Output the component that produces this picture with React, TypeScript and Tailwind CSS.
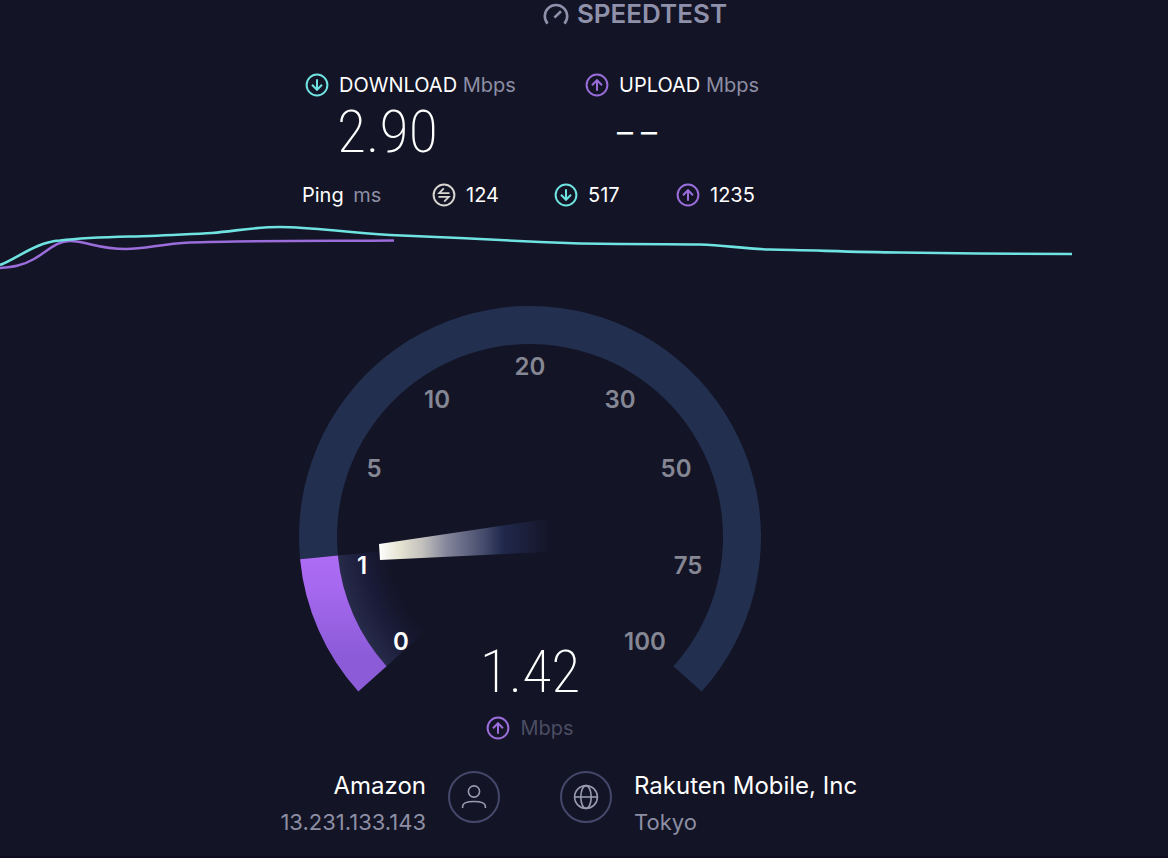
import type { ReactNode } from 'react'

// ── GAUGE GEOMETRY ───────────────────────────────────────────────
const CENTER = 231
const START_ANGLE = 138
const END_ANGLE = 402
const VALUE_ANGLE = 174.5

const TICKS = [
  { label: '0', x: 102, y: 344, active: true },
  { label: '1', x: 63, y: 268, active: true },
  { label: '5', x: 75, y: 171, active: false },
  { label: '10', x: 138, y: 102, active: false },
  { label: '20', x: 231, y: 69, active: false },
  { label: '30', x: 321, y: 102, active: false },
  { label: '50', x: 377, y: 171, active: false },
  { label: '75', x: 389, y: 268, active: false },
  { label: '100', x: 346, y: 344, active: false },
]

function polar(radius: number, angle: number) {
  const rad = (angle * Math.PI) / 180
  return `${CENTER + radius * Math.cos(rad)} ${CENTER + radius * Math.sin(rad)}`
}

function band(inner: number, outer: number, from: number, to: number) {
  const large = to - from > 180 ? 1 : 0
  return [
    `M ${polar(outer, from)}`,
    `A ${outer} ${outer} 0 ${large} 1 ${polar(outer, to)}`,
    `L ${polar(inner, to)}`,
    `A ${inner} ${inner} 0 ${large} 0 ${polar(inner, from)}`,
    'Z',
  ].join(' ')
}

// ── ICONS ────────────────────────────────────────────────────────
function RoundIcon({ className, children }: { className: string; children: ReactNode }) {
  return (
    <svg
      viewBox="0 0 24 24"
      className={`size-6 shrink-0 ${className}`}
      fill="none"
      stroke="currentColor"
      strokeWidth="2"
      aria-hidden="true"
    >
      <circle cx="12" cy="12" r="10.4" />
      {children}
    </svg>
  )
}

function DownIcon() {
  return (
    <RoundIcon className="text-[#6fe3e1]">
      <path d="M12 6.200v10.600M7 11.800l5 5 5-5" />
    </RoundIcon>
  )
}

function UpIcon() {
  return (
    <RoundIcon className="text-[#9a6ddb]">
      <path d="M12 17.800V7.200M7 12.200l5-5 5 5" />
    </RoundIcon>
  )
}

function PingIcon() {
  return (
    <RoundIcon className="text-[#d8d4d0]">
      <path d="M17.500 10.200H7.200L11.800 5.400M6.500 13.800h10.300l-4.600 4.800" strokeWidth="1.8" />
    </RoundIcon>
  )
}

function LogoIcon() {
  return (
    <svg viewBox="0 0 26 24" className="h-6 w-[26px]" fill="none" stroke="currentColor" strokeWidth="2.6" aria-hidden="true">
      <path d="M4.600 21.600A11.200 11.200 0 1 1 21.400 21.600" />
      <path d="M11.400 15.600L18 9.200" />
    </svg>
  )
}

// ── SECTIONS ─────────────────────────────────────────────────────
function Metric({ icon, name, children }: { icon: ReactNode; name: string; children: ReactNode }) {
  return (
    <div>
      <div className="flex h-6 items-center gap-2.5 text-xl leading-6 whitespace-nowrap">
        {icon}
        <span>
          {name} <span className="text-[#8d8ea3]">Mbps</span>
        </span>
      </div>
      <div className="flex h-[70px] items-center gap-2 pl-8">{children}</div>
    </div>
  )
}

function HistoryChart() {
  return (
    <svg viewBox="0 0 1168 70" preserveAspectRatio="none" className="mt-[3px] block h-[70px] w-full" fill="none" strokeWidth="2.6" aria-hidden="true">
      <path
        stroke="#9a6ddb"
        d="M0 58C12 57 22 56 34 49C48 41 56 31 70 31C86 31 98 39 126 39C146 39 160 34 190 32.500C240 30.500 330 31 394 30.500"
      />
      <path
        stroke="#6fe3e1"
        d="M0 55C18 48 36 32 60 30.500C90 27 120 27 150 26C180 24.500 196 24 212 23C236 21 254 17 280 17C312 17 340 22 390 25C430 26.500 500 30 540 32C570 33.500 590 34 620 34C650 34 670 34 700 34.500C724 35 744 39 770 39.500C810 40 850 42 900 42.500C960 43.500 1010 44 1072 44"
      />
    </svg>
  )
}

function Dial() {
  return (
    <svg viewBox="0 0 462 390" className="h-[390px] w-[462px] [grid-area:1/1]" role="img" aria-label="Current speed">
      <defs>
        <linearGradient id="value" x1="0" y1="0" x2="0" y2="1">
          <stop offset="0" stopColor="#ae6cf5" />
          <stop offset="0.25" stopColor="#a568ee" />
          <stop offset="0.75" stopColor="#8b5bd8" />
          <stop offset="1" stopColor="#8b5bd8" />
        </linearGradient>
        <radialGradient id="glow" gradientUnits="userSpaceOnUse" cx={CENTER} cy={CENTER} r="193">
          <stop offset="0.73" stopColor="#1d1e40" stopOpacity="0" />
          <stop offset="0.86" stopColor="#1d1e40" stopOpacity="0.7" />
          <stop offset="1" stopColor="#272c4a" />
        </radialGradient>
        <linearGradient id="needle">
          <stop offset="0" stopColor="#ffffff" />
          <stop offset="0.12" stopColor="#e6e4d2" />
          <stop offset="0.26" stopColor="#c2c0bc" />
          <stop offset="0.4" stopColor="#85869c" />
          <stop offset="0.62" stopColor="#454c6c" />
          <stop offset="0.74" stopColor="#20284c" />
          <stop offset="1" stopColor="#151629" />
        </linearGradient>
      </defs>
      <path d={band(193, 231, VALUE_ANGLE, END_ANGLE)} fill="#222f4e" />
      <path d={band(140, 193, START_ANGLE, VALUE_ANGLE)} fill="url(#glow)" />
      <path d={band(193, 231, START_ANGLE, VALUE_ANGLE)} fill="url(#value)" />
      <path d="M80 238L248 213V246L81 254Z" fill="url(#needle)" />
      {TICKS.map((tick) => (
        <text
          key={tick.label}
          x={tick.x}
          y={tick.y}
          textAnchor="middle"
          className={tick.active ? 'fill-white text-2xl font-semibold' : 'fill-[#858794] text-2xl font-semibold'}
        >
          {tick.label}
        </text>
      ))}
    </svg>
  )
}

export default function App() {
  return (
    <div className="min-h-screen border-b-2 border-[#100c20] bg-[#131425] font-[Inter,sans-serif] text-white">
      <header className="flex h-7 items-center justify-center gap-2 pl-[102px] text-[#8f91ab]">
        <LogoIcon />
        <h1 className="text-[26px] leading-7 font-semibold">SPEEDTEST</h1>
      </header>

      <section className="mt-[45px] pr-[108px]">
        <div className="mx-auto w-[456px]">
          <div className="grid grid-cols-[280px_1fr] pl-[3px]">
            <Metric icon={<DownIcon />} name="DOWNLOAD">
              <span className="font-['Roboto_Condensed',Roboto,sans-serif] text-[60px] leading-[60px] font-extralight">2.90</span>
            </Metric>
            <Metric icon={<UpIcon />} name="UPLOAD">
              <span className="text-[32px] leading-8">–</span>
              <span className="text-[32px] leading-8">–</span>
            </Metric>
          </div>
          <div className="mt-4 grid h-6 grid-cols-[130px_122px_122px_1fr] items-center text-xl leading-6">
            <span>
              Ping <span className="pl-1 text-[#8d8ea3]">ms</span>
            </span>
            <span className="flex items-center gap-2.5">
              <PingIcon />
              124
            </span>
            <span className="flex items-center gap-2.5">
              <DownIcon />
              517
            </span>
            <span className="flex items-center gap-2.5">
              <UpIcon />
              1235
            </span>
          </div>
        </div>
      </section>

      <HistoryChart />

      <main className="mt-[26px] pr-[108px]">
        <div className="grid h-[434px] justify-center">
          <Dial />
          <div className="flex flex-col items-center self-end [grid-area:1/1]">
            <span className="font-['Roboto_Condensed',Roboto,sans-serif] text-[60px] leading-[60px] font-extralight">1.42</span>
            <span className="mt-3.5 flex h-6 items-center gap-2.5 text-xl leading-6 text-[#4b4d63]">
              <UpIcon />
              Mbps
            </span>
          </div>
        </div>
      </main>

      <footer className="mt-7 grid grid-cols-2 gap-x-[60px] pr-[108px] leading-9">
        <div className="flex justify-end gap-[22px] text-right">
          <div>
            <p className="text-2xl leading-9">Amazon</p>
            <p className="text-[22px] text-[#8d8ea3]">13.231.133.143</p>
          </div>
          <svg viewBox="0 0 52 52" className="mt-[3px] size-[52px]" fill="none" strokeWidth="1.6" aria-hidden="true">
            <circle cx="26" cy="26" r="25" stroke="#45476a" strokeWidth="2" />
            <g stroke="#9a9bb0">
              <circle cx="26" cy="20.500" r="5.600" />
              <path d="M14.600 37v-1.500c0-3.400 4.400-5 11.400-5s11.400 1.600 11.400 5V37" />
            </g>
          </svg>
        </div>
        <div className="flex gap-[22px]">
          <svg viewBox="0 0 52 52" className="mt-[3px] size-[52px]" fill="none" strokeWidth="1.6" aria-hidden="true">
            <circle cx="26" cy="26" r="25" stroke="#45476a" strokeWidth="2" />
            <g stroke="#9a9bb0">
              <circle cx="26" cy="26" r="11.400" />
              <ellipse cx="26" cy="26" rx="5.200" ry="11.400" />
              <path d="M14.600 26h22.800" />
            </g>
          </svg>
          <div>
            <p className="text-2xl leading-9">Rakuten Mobile, Inc</p>
            <p className="text-[22px] text-[#8d8ea3]">Tokyo</p>
          </div>
        </div>
      </footer>
    </div>
  )
}
